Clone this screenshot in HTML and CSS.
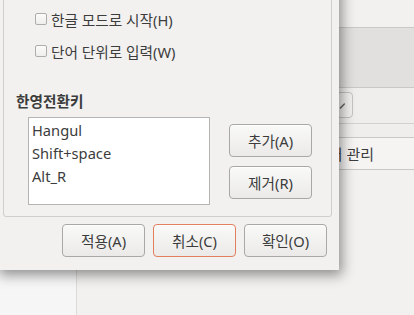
FILE: index.html
```html
<!DOCTYPE html>
<html lang="ko">
<head>
<meta charset="utf-8">
<link rel="stylesheet" href="styles.css">
</head>
<body>
<div class="screen">
  <aside class="sidebar"></aside>
  <main class="main">
    <div class="top-area"></div>
    <div class="band"></div>
    <div class="tool-row">
      <div class="tool-btn">
        <svg width="22" height="25" viewBox="0 0 22 25"><path d="M10 15 L14 11" stroke="#6a6a6a" stroke-width="1.6" fill="none" stroke-linecap="round"/></svg>
      </div>
    </div>
    <div class="gap-row"></div>
    <div class="manage-row"><span>언어 관리</span></div>
  </main>
</div>

<div class="dialog">
  <div class="frame">
    <label class="check-row"><span class="checkbox"></span><span>한글 모드로 시작(H)</span></label>
    <label class="check-row"><span class="checkbox"></span><span>단어 단위로 입력(W)</span></label>
    <div class="section-title">한영전환키</div>
    <div class="keys">
      <ul class="key-list">
        <li>Hangul</li>
        <li>Shift+space</li>
        <li>Alt_R</li>
      </ul>
      <div class="side-buttons">
        <button class="btn">추가(A)</button>
        <button class="btn">제거(R)</button>
      </div>
    </div>
  </div>
  <div class="actions">
    <button class="btn">적용(A)</button>
    <button class="btn btn-cancel">취소(C)</button>
    <button class="btn">확인(O)</button>
  </div>
</div>
</body>
</html>
```

FILE: styles.css
```css
* { box-sizing: border-box; }
html, body {
  margin: 0;
  padding: 0;
}
body {
  width: 414px;
  height: 315px;
  overflow: hidden;
  position: relative;
  background: #f2f1f0;
  font-family: "Noto Sans", "Noto Sans CJK KR", sans-serif;
  font-size: 14.67px;
  color: #3c3c3c;
}

/* background window */
.screen {
  display: grid;
  grid-template-columns: 77px 1fr;
  height: 315px;
}
.sidebar {
  background: #f6f6f6;
  border-right: 1px solid #dcdbda;
}
.main {
  display: flex;
  flex-direction: column;
}
.top-area {
  height: 27px;
}
.band {
  height: 61px;
  background: #e1e0de;
  border-top: 1px solid #c9c8c6;
  border-bottom: 1px solid #c9c8c6;
}
.tool-row {
  height: 35px;
  display: flex;
  align-items: flex-start;
  padding: 4px 0 0 253px;
  background: #efeeed;
}
.tool-btn {
  width: 23px;
  height: 26px;
  border: 1px solid #c4c3c1;
  border-radius: 4px;
  background: #f1f0ef;
  display: flex;
}
.gap-row {
  height: 15px;
  border-top: 1px solid #d2d1cf;
  border-bottom: 1px solid #c9c8c6;
  background: #efeeed;
}
.manage-row {
  height: 32px;
  border-bottom: 1px solid #c9c8c6;
  background: #f5f4f3;
  display: flex;
  align-items: center;
  padding-left: 238px;
  font-size: 15px;
}

/* dialog */
.dialog {
  position: absolute;
  left: 0;
  top: -30px;
  width: 339px;
  height: 300px;
  background: #f2f1f0;
  padding: 3px 7px 0 3px;
  box-shadow: 1px 3px 12px 2px rgba(0, 0, 0, 0.42);
  display: flex;
  flex-direction: column;
}
.frame {
  height: 244px;
  border: 1px solid #cfcecc;
  border-radius: 3px;
  padding: 35px 0 0 0;
  display: flex;
  flex-direction: column;
}
.check-row {
  height: 20px;
  display: flex;
  align-items: center;
  gap: 4px;
  padding-left: 31px;
  margin-bottom: 12px;
}
.checkbox {
  width: 12px;
  height: 12px;
  flex: none;
  border: 1px solid #aeadab;
  border-radius: 2px;
  background: linear-gradient(#fbfbfb, #efeeed);
}
.section-title {
  margin-top: 18px;
  height: 20px;
  line-height: 20px;
  padding-left: 12px;
  font-weight: bold;
}
.keys {
  display: flex;
  margin-top: 6px;
  padding-left: 24px;
}
.key-list {
  list-style: none;
  margin: 0;
  padding: 1px 0 0 3px;
  width: 182px;
  height: 88px;
  background: #ffffff;
  border: 1px solid #b5b4b2;
}
.key-list li {
  height: 23px;
  line-height: 23px;
}
.side-buttons {
  display: flex;
  flex-direction: column;
  gap: 9px;
  margin: 7px 0 0 19px;
}
.btn {
  width: 83px;
  height: 33px;
  border: 1px solid #a9a8a6;
  border-radius: 4px;
  background: linear-gradient(#f9f9f8, #ebeae9);
  font-family: inherit;
  font-size: 14.67px;
  color: #3c3c3c;
  padding: 0;
  box-shadow: 0 1px 0 rgba(255,255,255,0.8) inset;
}
.btn-cancel {
  border-color: #e27f5c;
}
.actions {
  display: flex;
  justify-content: flex-end;
  gap: 8px;
  margin-top: 7px;
  padding-right: 5px;
}
```
